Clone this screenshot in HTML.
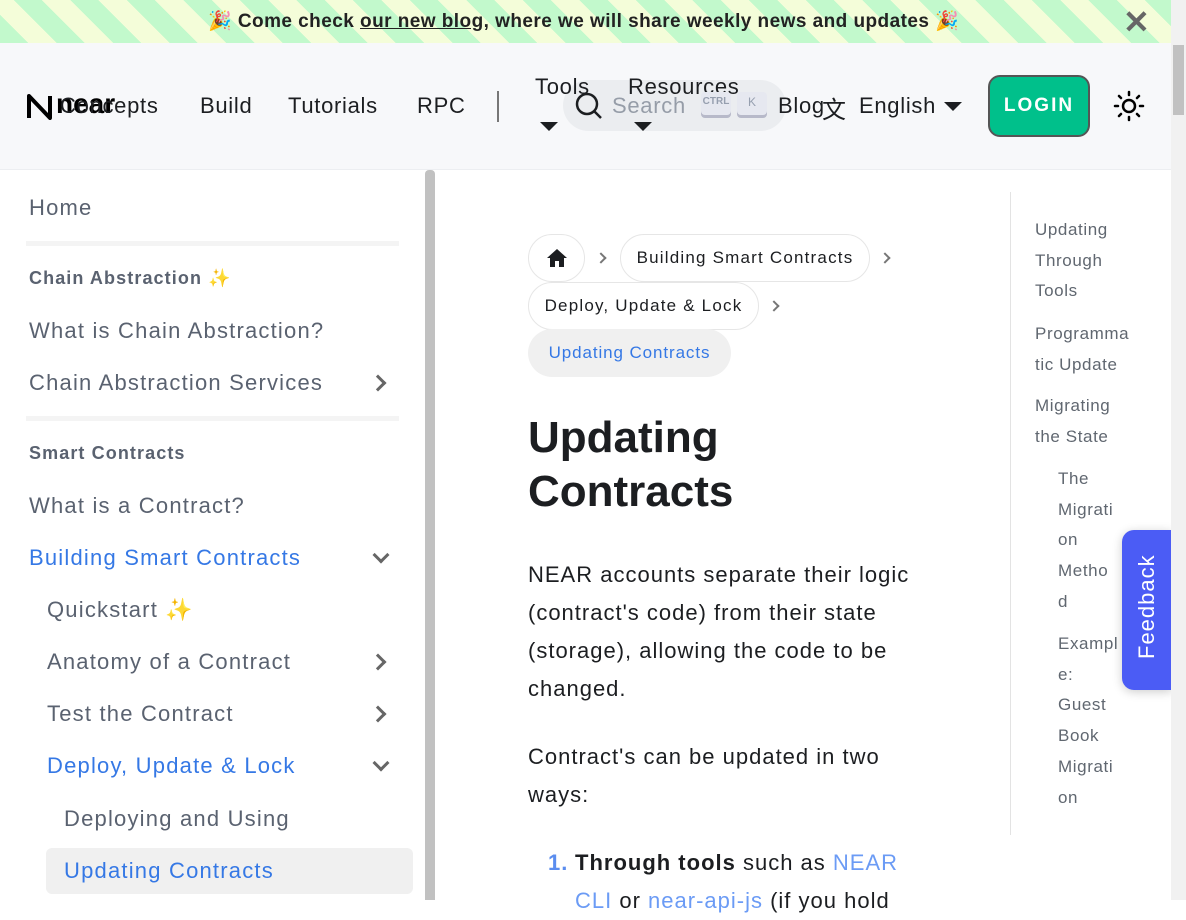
<!DOCTYPE html>
<html><head><meta charset="utf-8"><style>
*{margin:0;padding:0;box-sizing:border-box}
body{width:1186px;height:900px;overflow:hidden;background:#fff;font-family:"Liberation Sans",sans-serif;position:relative;color:#1c1e21}
.a{position:absolute;white-space:nowrap}
#banner{left:0;top:0;width:1171px;height:43px;background:repeating-linear-gradient(45deg,#c2f9cc 0 20px,#f4fdd9 20px 40px)}
#nav{left:0;top:43px;width:1171px;height:127px;background:#f7f8fa;border-bottom:1px solid #eceef1}
.nv{font-size:22px;color:#1c1e21;letter-spacing:0.7px}
.caret{width:0;height:0;border-left:9px solid transparent;border-right:9px solid transparent;border-top:9px solid #1c1e21}
.sb{font-size:22px;color:#5a6270;letter-spacing:1.2px}
.sh{font-size:18px;font-weight:bold;color:#5a6270;letter-spacing:1.1px}
.blue{color:#3578e5}
.chev{width:12px;height:12px;border-right:3px solid #666;border-bottom:3px solid #666}
.pill{border:1px solid #e6e6e6;border-radius:24px;height:48px;font-size:17px;display:flex;align-items:center;justify-content:center;letter-spacing:1.2px}
.bc{width:8px;height:8px;border-right:2px solid #777;border-bottom:2px solid #777;transform:rotate(-45deg)}
.toc{font-size:17px;color:#606770;line-height:30.7px;white-space:normal;letter-spacing:0.6px}
.p{font-size:22px;line-height:38px;color:#1c1e21;white-space:normal;letter-spacing:1px}
</style></head><body>
<div id="banner" class="a"></div>
<div class="a" style="left:208px;top:9px;font-size:19px;font-weight:bold;color:#222;letter-spacing:0.45px">🎉 Come check <span style="text-decoration:underline">our new blog</span>, where we will share weekly news and updates 🎉</div>
<div class="a" style="left:1123px;top:3px;font-size:32px;color:#666;font-weight:bold">✕</div>
<div id="nav" class="a"></div>
<svg class="a" style="left:26px;top:93px" width="27" height="27" viewBox="0 0 27 27"><path d="M3 25V3l21 22V3" fill="none" stroke="#000" stroke-width="4" stroke-linejoin="round"/></svg>
<div class="a" style="left:56px;top:88px;font-size:28px;font-weight:bold;color:#000;letter-spacing:0px">near</div>
<div class="a nv" style="left:60px;top:93px">Concepts</div>
<div class="a nv" style="left:200px;top:93px">Build</div>
<div class="a nv" style="left:288px;top:93px">Tutorials</div>
<div class="a nv" style="left:417px;top:93px">RPC</div>
<div class="a" style="left:497px;top:91px;width:2px;height:31px;background:#777"></div>
<div class="a" style="left:563px;top:80px;width:223px;height:51px;border-radius:26px;background:#ebedf0"></div>
<div class="a nv" style="left:535px;top:74px">Tools</div>
<div class="a caret" style="left:540px;top:122px"></div>
<div class="a nv" style="left:628px;top:74px">Resources</div>
<div class="a caret" style="left:634px;top:122px"></div>
<svg class="a" style="left:574px;top:91px" width="30" height="30" viewBox="0 0 30 30"><circle cx="13" cy="13" r="10" fill="none" stroke="#1c1e21" stroke-width="2.5"/><path d="M20 20l7 7" stroke="#1c1e21" stroke-width="2.5"/></svg>
<div class="a nv" style="left:612px;top:93px;color:#969da8">Search</div>
<div class="a" style="left:701px;top:92px;width:30px;height:26px;border-radius:4px;background:#e6e8f0;box-shadow:inset 0 -3px #b7b9c9;font-size:10px;color:#969faf;text-align:center;line-height:20px;font-weight:bold">CTRL</div>
<div class="a" style="left:737px;top:92px;width:30px;height:26px;border-radius:4px;background:#e6e8f0;box-shadow:inset 0 -3px #b7b9c9;font-size:12px;color:#969faf;text-align:center;line-height:20px">K</div>
<div class="a nv" style="left:778px;top:93px">Blog</div>
<div class="a" style="left:822px;top:90px;font-size:24px">文</div>
<div class="a nv" style="left:859px;top:93px">English</div>
<div class="a caret" style="left:944px;top:102px"></div>
<div class="a" style="left:988px;top:75px;width:102px;height:62px;border-radius:12px;background:#00c08b;border:2px solid #555;color:#fff;font-size:19px;font-weight:bold;text-align:center;line-height:58px;letter-spacing:2px">LOGIN</div>
<svg class="a" style="left:1113px;top:90px" width="32" height="32" viewBox="0 0 32 32"><circle cx="16" cy="16" r="6" fill="none" stroke="#000" stroke-width="2.5"/><g stroke="#000" stroke-width="2.5" stroke-linecap="round"><path d="M16 2v3M16 27v3M2 16h3M27 16h3M6 6l2 2M24 24l2 2M6 26l2-2M24 8l2-2"/></g></svg>
<!-- sidebar -->
<div class="a sb" style="left:29px;top:195px">Home</div>
<div class="a" style="left:26px;top:241px;width:373px;height:5px;background:#f4f4f4"></div>
<div class="a sh" style="left:29px;top:268px">Chain Abstraction ✨</div>
<div class="a sb" style="left:29px;top:318px">What is Chain Abstraction?</div>
<div class="a sb" style="left:29px;top:370px">Chain Abstraction Services</div>
<div class="a chev" style="left:372px;top:377px;transform:rotate(-45deg)"></div>
<div class="a" style="left:26px;top:416px;width:373px;height:5px;background:#f4f4f4"></div>
<div class="a sh" style="left:29px;top:443px">Smart Contracts</div>
<div class="a sb" style="left:29px;top:493px">What is a Contract?</div>
<div class="a sb blue" style="left:29px;top:545px">Building Smart Contracts</div>
<div class="a chev" style="left:375px;top:549px;transform:rotate(45deg)"></div>
<div class="a sb" style="left:47px;top:597px">Quickstart ✨</div>
<div class="a sb" style="left:47px;top:649px">Anatomy of a Contract</div>
<div class="a chev" style="left:372px;top:656px;transform:rotate(-45deg)"></div>
<div class="a sb" style="left:47px;top:701px">Test the Contract</div>
<div class="a chev" style="left:372px;top:708px;transform:rotate(-45deg)"></div>
<div class="a sb blue" style="left:47px;top:753px">Deploy, Update &amp; Lock</div>
<div class="a chev" style="left:375px;top:757px;transform:rotate(45deg)"></div>
<div class="a sb" style="left:64px;top:806px">Deploying and Using</div>
<div class="a" style="left:46px;top:848px;width:367px;height:46px;border-radius:6px;background:#f0f0f0"></div>
<div class="a sb blue" style="left:64px;top:858px">Updating Contracts</div>
<div class="a" style="left:425px;top:170px;width:10px;height:730px;background:#c1c1c1;border-radius:4px 4px 0 0"></div>
<!-- breadcrumbs -->
<div class="a pill" style="left:528px;top:234px;width:57px"><svg width="22" height="20" viewBox="0 0 22 20"><path d="M11 1L1 10h3v9h5v-6h4v6h5v-9h3z" fill="#1c1e21"/></svg></div>
<div class="a bc" style="left:597px;top:254px"></div>
<div class="a pill" style="left:620px;top:234px;width:250px">Building Smart Contracts</div>
<div class="a bc" style="left:881px;top:254px"></div>
<div class="a pill" style="left:528px;top:282px;width:231px">Deploy, Update &amp; Lock</div>
<div class="a bc" style="left:770px;top:302px"></div>
<div class="a pill" style="left:528px;top:329px;border:none;background:#f0f0f0;width:203px;color:#3578e5;letter-spacing:0.9px">Updating Contracts</div>
<div class="a" style="left:528px;top:411px;font-size:44px;font-weight:bold;line-height:54px;color:#1c1e21">Updating<br>Contracts</div>
<div class="a p" style="left:528px;top:556px;width:400px">NEAR accounts separate their logic (contract's code) from their state (storage), allowing the code to be changed.</div>
<div class="a p" style="left:528px;top:738px;width:400px">Contract's can be updated in two ways:</div>
<div class="a p" style="left:548px;top:844px;width:380px"><span class="a" style="left:0;top:0;color:#5b8def;font-weight:bold">1.</span><span style="padding-left:27px"><b>Through tools</b> such as <span style="color:#6b9bf5">NEAR</span></span><br><span style="padding-left:27px"><span style="color:#6b9bf5">CLI</span> or <span style="color:#6b9bf5">near-api-js</span> (if you hold</span></div>
<!-- toc -->
<div class="a" style="left:1010px;top:192px;width:1px;height:643px;background:#e3e3e3"></div>
<div class="a toc" style="left:1035px;top:215px;width:110px">Updating<br>Through<br>Tools</div>
<div class="a toc" style="left:1035px;top:319px;width:110px">Programma<br>tic Update</div>
<div class="a toc" style="left:1035px;top:391px;width:110px">Migrating<br>the State</div>
<div class="a toc" style="left:1058px;top:464px;width:90px">The<br>Migrati<br>on<br>Metho<br>d</div>
<div class="a toc" style="left:1058px;top:629px;width:90px">Exampl<br>e:<br>Guest<br>Book<br>Migrati<br>on</div>
<div class="a" style="left:1122px;top:530px;width:50px;height:160px;background:#4b5cf5;border-radius:12px 0 0 12px;box-shadow:0 2px 10px rgba(0,0,0,.2)"></div>
<div class="a" style="left:1098px;top:597px;font-size:22px;color:#fff;transform:rotate(-90deg);transform-origin:center;width:98px;text-align:center;letter-spacing:1px">Feedback</div>
<div class="a" style="left:1171px;top:0;width:15px;height:900px;background:#f1f1f1"></div>
<div class="a" style="left:1173px;top:45px;width:11px;height:70px;background:#c1c1c1"></div>
</body></html>
